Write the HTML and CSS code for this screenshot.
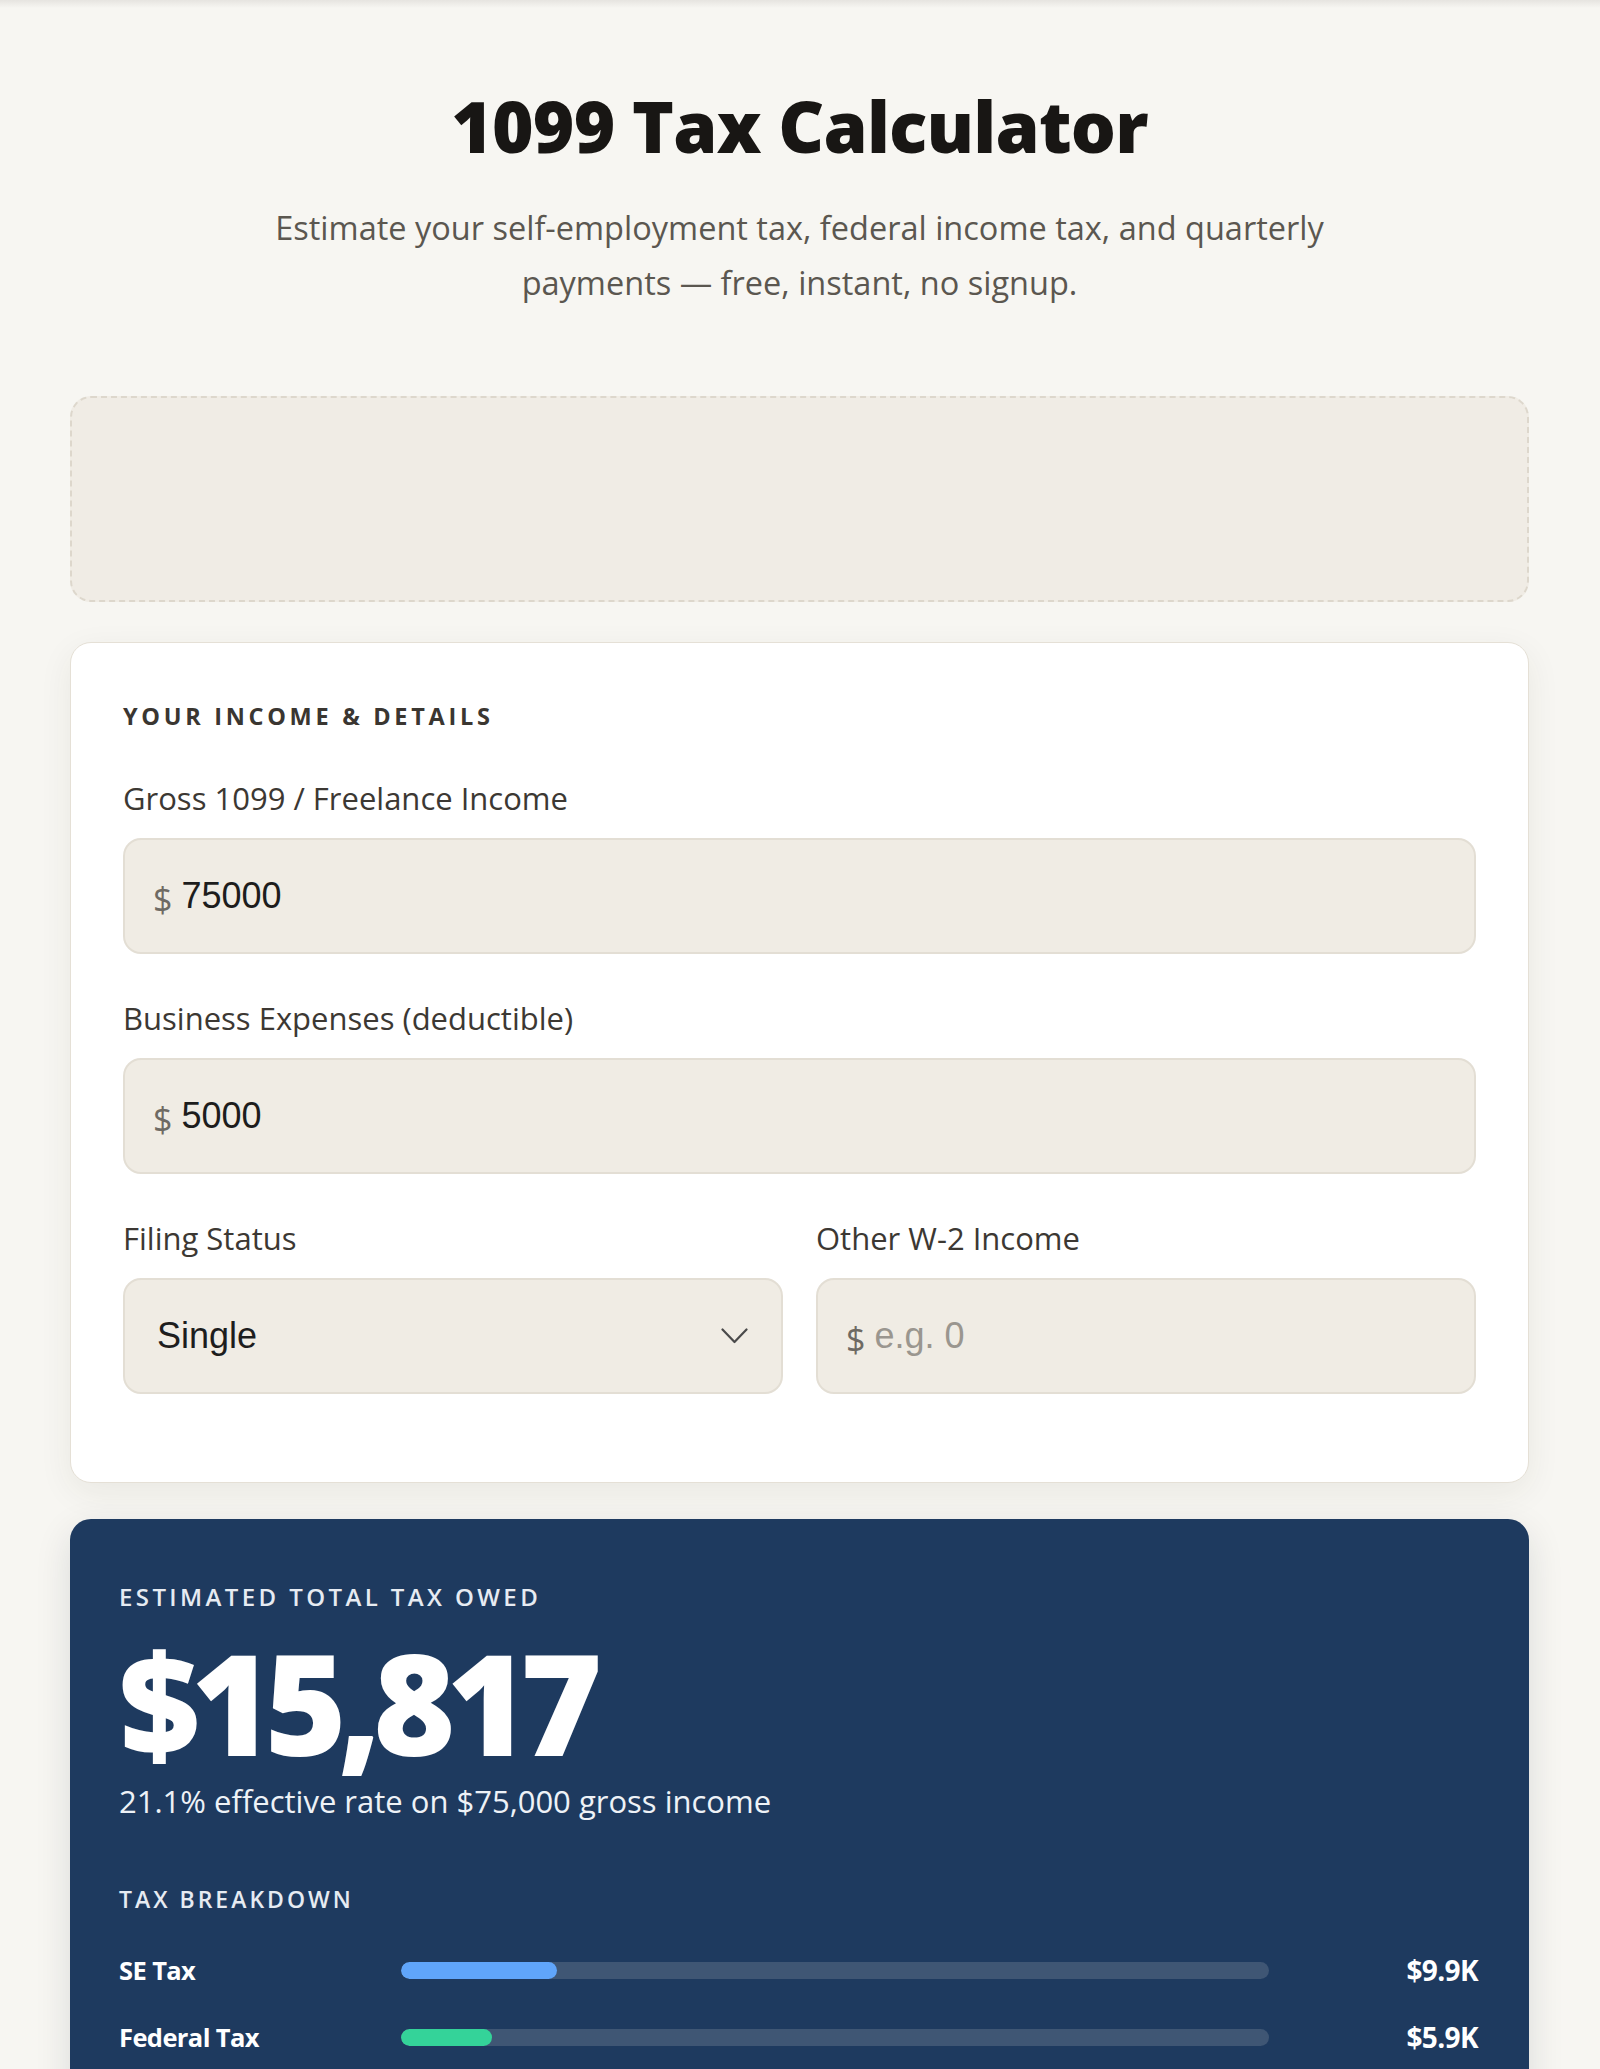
FILE: index.html
```html
<!DOCTYPE html>
<html lang="en">
<head>
<meta charset="utf-8">
<title>1099 Tax Calculator</title>
<link rel="stylesheet" href="styles.css">
</head>
<body>
<main class="page">
  <header class="hero">
    <h1 class="hero-title">1099 Tax Calculator</h1>
    <p class="hero-sub">Estimate your self-employment tax, federal income tax, and quarterly payments — free, instant, no signup.</p>
  </header>

  <div class="ad-slot"></div>

  <section class="card">
    <h2 class="section-title">YOUR INCOME &amp; DETAILS</h2>
    <div class="fields">
      <div class="field">
        <label class="field-label" for="gross">Gross 1099 / Freelance Income</label>
        <div class="money">
          <span class="money-sign">$</span>
          <input id="gross" class="money-input" type="text" value="75000">
        </div>
      </div>
      <div class="field">
        <label class="field-label" for="expenses">Business Expenses (deductible)</label>
        <div class="money">
          <span class="money-sign">$</span>
          <input id="expenses" class="money-input" type="text" value="5000">
        </div>
      </div>
      <div class="field-row">
        <div class="field">
          <span class="field-label" id="status-label">Filing Status</span>
          <div class="select-box" role="button" tabindex="0" aria-labelledby="status-label">
            <span class="select-value">Single</span>
            <svg class="chevron" width="27" height="16" viewBox="0 0 27 16" aria-hidden="true"><path d="M1.5 1.5 L13.5 14 L25.5 1.5" fill="none" stroke="#4a4a4a" stroke-width="2.2" stroke-linecap="round" stroke-linejoin="round"/></svg>
          </div>
        </div>
        <div class="field">
          <label class="field-label" for="w2">Other W-2 Income</label>
          <div class="money">
            <span class="money-sign">$</span>
            <input id="w2" class="money-input" type="text" placeholder="e.g. 0">
          </div>
        </div>
      </div>
    </div>
  </section>

  <section class="result">
    <div class="result-label">ESTIMATED TOTAL TAX OWED</div>
    <div class="result-amount">$15,817</div>
    <div class="result-sub">21.1% effective rate on $75,000 gross income</div>

    <div class="breakdown-title">TAX BREAKDOWN</div>
    <div class="breakdown">
      <div class="bd-row">
        <span class="bd-label">SE Tax</span>
        <div class="bd-track"><div class="bd-fill bd-fill-se" style="width:18%"></div></div>
        <span class="bd-value">$9.9K</span>
      </div>
      <div class="bd-row">
        <span class="bd-label">Federal Tax</span>
        <div class="bd-track"><div class="bd-fill bd-fill-fed" style="width:10.5%"></div></div>
        <span class="bd-value">$5.9K</span>
      </div>
    </div>
  </section>
</main>
</body>
</html>
```

FILE: styles.css
```css
* { box-sizing: border-box; }

html, body {
  margin: 0;
  padding: 0;
}

body {
  background: linear-gradient(to bottom, #e6e4e0 0px, #f7f6f2 8px) no-repeat, #f7f6f2;
  font-family: "Open Sans", "Noto Sans", sans-serif;
  color: #1c1a17;
}

.page {
  max-width: 1600px;
  margin: 0 auto;
  padding: 0 71px 0 70px;
}

/* Hero */
.hero {
  padding-top: 83px;
  text-align: center;
}

.hero-title {
  margin: 0;
  font-size: 71px;
  line-height: 85px;
  font-weight: 800;
  color: #181614;
  letter-spacing: -0.8px;
}

.hero-sub {
  margin: 32px auto 0;
  max-width: 1110px;
  font-size: 32.5px;
  line-height: 55px;
  color: #5b5750;
}

/* Ad placeholder */
.ad-slot {
  margin-top: 86px;
  height: 206px;
  background: #f0ece5;
  border: 2px dashed #ddd7cc;
  border-radius: 21px;
}

/* Input card */
.card {
  margin-top: 40px;
  background: #ffffff;
  border: 1px solid #e5e0d6;
  border-radius: 21px;
  padding: 57px 52px 88px;
  box-shadow: 0 10px 34px rgba(60, 50, 30, 0.07);
}

.section-title {
  margin: 0 0 46px;
  font-size: 23.5px;
  line-height: 32px;
  font-weight: 700;
  letter-spacing: 3.7px;
  color: #3a3631;
}

.fields {
  display: flex;
  flex-direction: column;
  gap: 44px;
}

.field {
  display: flex;
  flex-direction: column;
  align-items: stretch;
  gap: 20px;
}

.field-label {
  align-self: flex-start;
  font-size: 31px;
  line-height: 40px;
  font-weight: 500;
  color: #3c3833;
}

.field-row {
  display: grid;
  grid-template-columns: 1fr 1fr;
  gap: 33px;
}

.money,
.select-box {
  display: flex;
  align-items: center;
  height: 116px;
  background: #f0ece4;
  border: 2px solid #e3ded4;
  border-radius: 18px;
}

.money {
  padding-left: 28px;
}

.money-sign {
  font-family: "Open Sans", sans-serif;
  font-size: 34px;
  line-height: 40px;
  color: #6e6a63;
  margin-right: 9px;
  position: relative;
  top: 3px;
}

.money-input {
  flex: 1;
  min-width: 0;
  border: none;
  outline: none;
  background: transparent;
  font-family: "Liberation Sans", Arial, sans-serif;
  font-size: 36px;
  line-height: 42px;
  height: 42px;
  color: #1d1d1d;
  padding: 0;
}

.money-input::placeholder {
  color: #9a968f;
}

.select-box {
  justify-content: space-between;
  padding: 0 33px 0 32px;
  cursor: pointer;
}

.select-value {
  font-family: "Liberation Sans", Arial, sans-serif;
  font-size: 36px;
  line-height: 42px;
  color: #1d1d1d;
}

.chevron {
  flex: none;
}

/* Result card */
.result {
  margin-top: 36px;
  background: #1e3a5f;
  border-radius: 21px;
  padding: 62px 51px 70px 49px;
  color: #ffffff;
  box-shadow: 0 12px 36px rgba(20, 30, 50, 0.12);
}

.result-label {
  font-size: 24px;
  line-height: 32px;
  font-weight: 600;
  letter-spacing: 3.4px;
  color: #e6ebf2;
}

.result-amount {
  margin-top: 19px;
  font-size: 140px;
  line-height: 140px;
  font-weight: 800;
  letter-spacing: -8.5px;
  color: #ffffff;
}

.result-sub {
  margin-top: 10px;
  font-size: 31px;
  line-height: 38px;
  color: #eef2f7;
}

.breakdown-title {
  margin-top: 64px;
  font-size: 23px;
  line-height: 30px;
  font-weight: 600;
  letter-spacing: 3px;
  color: #e6ebf2;
}

.breakdown {
  margin-top: 38px;
  display: flex;
  flex-direction: column;
  gap: 31px;
}

.bd-row {
  display: grid;
  grid-template-columns: 258px 1fr 185px;
  gap: 24px;
  align-items: center;
  height: 36px;
}

.bd-label,
.bd-value {
  font-size: 25.5px;
  line-height: 36px;
  font-weight: 700;
  color: #ffffff;
  letter-spacing: -0.6px;
}

.bd-value {
  text-align: right;
  font-size: 28px;
}

.bd-track {
  height: 17px;
  border-radius: 9px;
  background: #3f5674;
  overflow: hidden;
}

.bd-fill {
  height: 100%;
  border-radius: 9px;
}

.bd-fill-se { background: #60a5fa; }
.bd-fill-fed { background: #34d399; }
```
